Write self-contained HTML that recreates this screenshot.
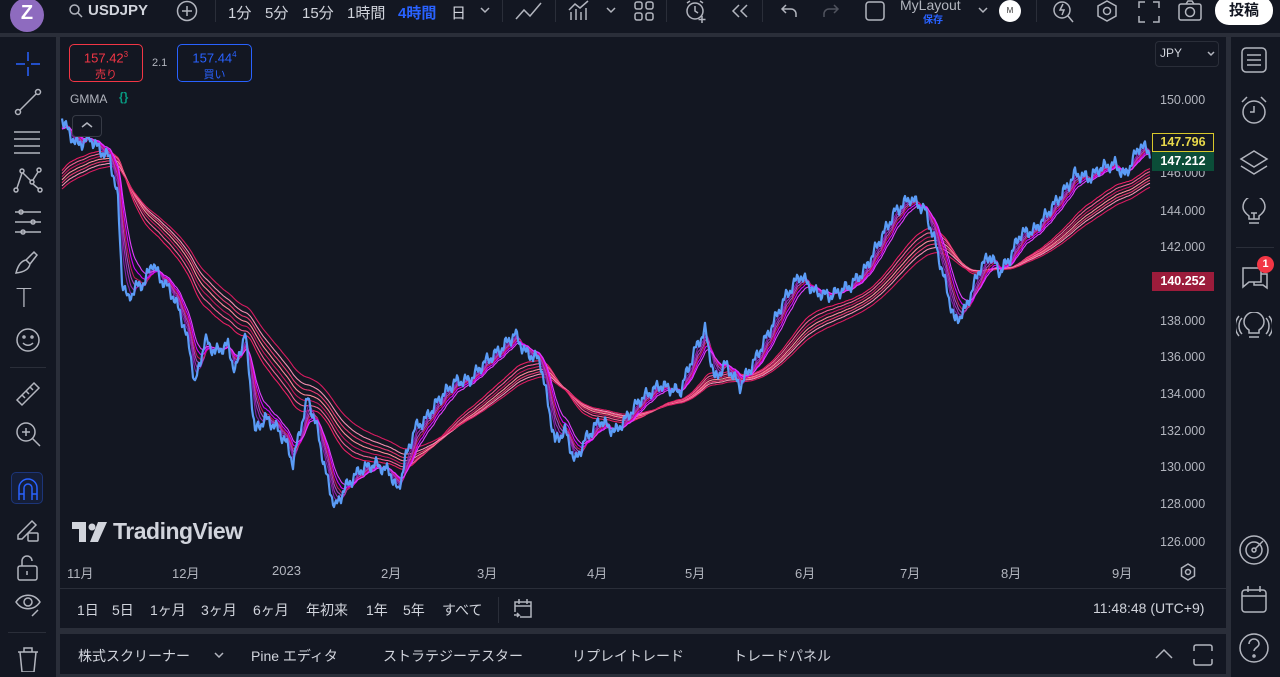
<!DOCTYPE html>
<html><head><meta charset="utf-8"><style>
*{margin:0;padding:0;box-sizing:border-box}
body{width:1280px;height:670px;background:#2a2e39;font-family:"Liberation Sans","Noto Sans CJK JP",sans-serif;color:#d1d4dc;position:relative;overflow:hidden}
.p{position:absolute;background:#131722}
.t{position:absolute;white-space:nowrap}
.ic{position:absolute}
svg.i{position:absolute;fill:none;stroke:#b2b5be;stroke-width:1.5}
</style></head><body>
<div class="p" style="left:0;top:0;width:1280px;height:33px"></div>
<div class="ic" style="left:10px;top:-2px;width:34px;height:34px;border-radius:50%;background:#8e6bbf;color:#fff;font-size:20px;font-weight:bold;text-align:center;line-height:30px">Z</div>
<svg class="i" style="left:68px;top:3px" width="16" height="16" viewBox="0 0 16 16"><circle cx="6.5" cy="6.5" r="4.5"/><path d="M10 10l4 4"/></svg>
<div class="t" style="left:88px;top:2px;font-size:15px;font-weight:bold;color:#d1d4dc">USDJPY</div>
<svg class="i" style="left:176px;top:0" width="22" height="22"><circle cx="11" cy="11" r="9.5"/><path d="M11 6v10M6 11h10"/></svg>
<div class="p" style="left:215px;top:0;width:1px;height:22px;background:#2a2e39"></div>
<div class="t" style="left:228px;top:2px;font-size:15px">1分</div>
<div class="t" style="left:265px;top:2px;font-size:15px">5分</div>
<div class="t" style="left:302px;top:2px;font-size:15px">15分</div>
<div class="t" style="left:347px;top:2px;font-size:15px">1時間</div>
<div class="t" style="left:398px;top:2px;font-size:15px;color:#2962ff;font-weight:bold">4時間</div>
<div class="t" style="left:451px;top:2px;font-size:15px">日</div>
<svg class="i" style="left:480px;top:6px" width="10" height="8"><path d="M1 2l4 4 4-4"/></svg>
<div class="p" style="left:502px;top:0;width:1px;height:22px;background:#2a2e39"></div>
<svg class="i" style="left:515px;top:1px" width="28" height="20"><path d="M1 18l8-9 6 6 11-13"/></svg>
<div class="p" style="left:555px;top:0;width:1px;height:22px;background:#2a2e39"></div>
<svg class="i" style="left:568px;top:0" width="26" height="22"><path d="M3 20V12M8 20V9M13 20V12M18 20V8M1 10l6-6 5 4 8-7"/></svg>
<svg class="i" style="left:606px;top:6px" width="10" height="8"><path d="M1 2l4 4 4-4"/></svg>
<svg class="i" style="left:634px;top:1px" width="20" height="20"><rect x="1" y="1" width="7" height="7" rx="2"/><rect x="12" y="1" width="7" height="7" rx="2"/><rect x="1" y="12" width="7" height="7" rx="2"/><rect x="12" y="12" width="7" height="7" rx="2"/></svg>
<div class="p" style="left:666px;top:0;width:1px;height:22px;background:#2a2e39"></div>
<svg class="i" style="left:684px;top:0" width="24" height="24"><circle cx="11" cy="11" r="8"/><path d="M11 6v5l3 2M3 3l3-2M19 3l-3-2M18 16v7M14.5 19.5h7"/></svg>
<svg class="i" style="left:730px;top:3px" width="20" height="16"><path d="M9 2l-6 6 6 6M17 2l-6 6 6 6"/></svg>
<div class="p" style="left:762px;top:0;width:1px;height:22px;background:#2a2e39"></div>
<svg class="i" style="left:780px;top:3px" width="20" height="16"><path d="M6 2L2 6l4 4M2 6h9a5 5 0 015 5v3"/></svg>
<svg class="i" style="left:820px;top:3px;stroke:#50535e" width="20" height="16"><path d="M14 2l4 4-4 4M18 6H9a5 5 0 00-5 5v3"/></svg>
<svg class="i" style="left:864px;top:0" width="22" height="22"><rect x="2" y="2" width="18" height="18" rx="3"/></svg>
<div class="t" style="left:900px;top:-3px;font-size:14px;color:#b2b5be">MyLayout</div>
<div class="t" style="left:923px;top:11px;font-size:10px;color:#2962ff;font-weight:bold">保存</div>
<svg class="i" style="left:978px;top:6px" width="10" height="8"><path d="M1 2l4 4 4-4"/></svg>
<div class="ic" style="left:999px;top:0;width:22px;height:22px;border-radius:50%;background:#fff;color:#333;font-size:8px;text-align:center;line-height:22px">M</div>
<div class="p" style="left:1036px;top:0;width:1px;height:22px;background:#2a2e39"></div>
<svg class="i" style="left:1052px;top:0" width="24" height="24"><circle cx="10" cy="10" r="8"/><path d="M16 16l5 6M11 4l-3 6h4l-2 5"/></svg>
<svg class="i" style="left:1095px;top:0" width="24" height="24"><path d="M12 1l9 5v10l-9 5-9-5V6z"/><circle cx="12" cy="11" r="3.5"/></svg>
<svg class="i" style="left:1138px;top:1px" width="22" height="22"><path d="M1 7V1h6M15 1h6v6M21 15v6h-6M7 21H1v-6"/></svg>
<svg class="i" style="left:1178px;top:0" width="24" height="22"><rect x="1" y="4" width="22" height="16" rx="2"/><circle cx="12" cy="12" r="4.5"/><path d="M8 4l2-3h4l2 3"/></svg>
<div class="ic" style="left:1215px;top:-4px;width:58px;height:29px;border-radius:14px;background:#fff;color:#131722;font-size:15px;font-weight:bold;text-align:center;line-height:29px">投稿</div>

<div class="p" style="left:0;top:37px;width:56px;height:640px"></div>
<div class="p" style="left:60px;top:37px;width:1166px;height:591px"></div>
<div class="p" style="left:60px;top:588px;width:1166px;height:1px;background:#2a2e39"></div>
<div class="p" style="left:1231px;top:37px;width:49px;height:640px"></div>
<div class="p" style="left:60px;top:634px;width:1166px;height:40px"></div>

<svg class="i" style="left:14px;top:50px;stroke:#2962ff" width="28" height="28"><path d="M14 2v9M14 17v9M2 14h9M17 14h9"/></svg>
<svg class="i" style="left:14px;top:88px" width="28" height="28"><circle cx="4" cy="24" r="2.5"/><circle cx="24" cy="4" r="2.5"/><path d="M6 22L22 6"/></svg>
<svg class="i" style="left:12px;top:128px" width="30" height="28"><path d="M2 4h26M2 11h26M2 18h26M2 25h26"/></svg>
<svg class="i" style="left:13px;top:166px" width="30" height="28"><circle cx="3" cy="24" r="2"/><circle cx="9" cy="5" r="2"/><circle cx="19" cy="16" r="2"/><circle cx="26" cy="4" r="2"/><circle cx="27" cy="24" r="2"/><path d="M4 22l5-15M10 7l8 8M20 14l5-8M20 18l6 5"/></svg>
<svg class="i" style="left:13px;top:208px" width="30" height="28"><path d="M2 4h26M2 14h26M2 24h26"/><circle cx="8" cy="4" r="2"/><circle cx="20" cy="14" r="2"/><circle cx="10" cy="24" r="2"/></svg>
<svg class="i" style="left:13px;top:248px" width="30" height="28"><path d="M3 25c2-8 5-12 10-13l4 4c-1 5-5 8-14 9zM13 12l8-8 3 3-7 9"/></svg>
<div class="t" style="left:16px;top:284px;font-size:26px;color:#b2b5be;font-family:'DejaVu Sans',sans-serif;font-weight:300">T</div>
<svg class="i" style="left:14px;top:326px" width="28" height="28"><circle cx="14" cy="14" r="11"/><circle cx="10" cy="11" r="1"/><circle cx="18" cy="11" r="1"/><path d="M9 17c3 3 7 3 10 0"/></svg>
<div class="p" style="left:10px;top:367px;width:36px;height:1px;background:#2a2e39"></div>
<svg class="i" style="left:14px;top:380px" width="28" height="28"><path d="M3 20L20 3l5 5L8 25zM8 15l3 3M12 11l3 3M16 7l3 3"/></svg>
<svg class="i" style="left:14px;top:420px" width="28" height="28"><circle cx="12" cy="12" r="9"/><path d="M18.5 18.5L26 26M8 12h8M12 8v8"/></svg>
<div class="ic" style="left:11px;top:472px;width:32px;height:32px;border-radius:5px;background:#1e3a8a33;border:1px solid #2962ff55"></div>
<svg class="i" style="left:14px;top:476px;stroke:#2962ff" width="28" height="26"><path d="M5 24V12a9 9 0 0118 0v12M5 18h5M18 18h5M10 24V12a4 4 0 018 0v12"/></svg>
<svg class="i" style="left:14px;top:515px" width="28" height="28"><path d="M4 20L18 6l4 4L8 24H4z"/><rect x="14" y="18" width="10" height="8" rx="1"/></svg>
<svg class="i" style="left:16px;top:554px" width="24" height="28"><rect x="2" y="12" width="19" height="14" rx="2"/><path d="M6 12V7a5 5 0 0110 0M11 17v4"/></svg>
<svg class="i" style="left:14px;top:592px" width="28" height="28"><path d="M2 10c6-9 18-9 24 0c-6 9-18 9-24 0z"/><circle cx="14" cy="10" r="4"/><path d="M18 24l6-6"/></svg>
<div class="p" style="left:8px;top:632px;width:38px;height:1px;background:#2a2e39"></div>
<svg class="i" style="left:16px;top:646px" width="24" height="26"><path d="M2 6h20M8 6V2h8v4M4 6l2 20h12l2-20"/></svg>

<svg class="i" style="left:1240px;top:46px" width="28" height="28"><rect x="2" y="2" width="24" height="24" rx="4"/><path d="M7 9h14M7 14h14M7 19h14"/></svg>
<svg class="i" style="left:1240px;top:96px" width="28" height="30"><circle cx="14" cy="16" r="11"/><path d="M14 10v6h-4M2 6l5-5M26 6l-5-5"/></svg>
<svg class="i" style="left:1239px;top:148px" width="30" height="30"><path d="M15 3l13 8-13 8-13-8zM2 18l13 8 13-8"/></svg>
<svg class="i" style="left:1241px;top:198px" width="26" height="30"><path d="M8 21v-3c-4-3-6-6-6-9a11 11 0 0122 0c0 3-2 6-6 9v3zM8 25h10M13 15v6M10 15h6"/></svg>
<div class="p" style="left:1236px;top:247px;width:38px;height:1px;background:#2a2e39"></div>
<svg class="i" style="left:1240px;top:262px" width="30" height="32"><path d="M3 6h18v14H9l-6 5zM21 12h6v14l-4-3h-9v-3"/></svg>
<div class="ic" style="left:1257px;top:256px;width:17px;height:17px;border-radius:50%;background:#f23645;color:#fff;font-size:11px;font-weight:bold;text-align:center;line-height:17px">1</div>
<svg class="i" style="left:1236px;top:312px" width="36" height="30"><path d="M13 21v-3c-3-2-5-5-5-8a10 10 0 0120 0c0 3-2 6-5 8v3zM13 25h10M6 6c-4 4-4 12 0 16M3 4c-5 6-5 14 0 20M30 6c4 4 4 12 0 16M33 4c5 6 5 14 0 20"/></svg>
<svg class="i" style="left:1238px;top:534px" width="32" height="32"><circle cx="16" cy="16" r="14"/><circle cx="16" cy="16" r="8"/><circle cx="16" cy="16" r="2"/><path d="M17 15l8-8"/></svg>
<svg class="i" style="left:1240px;top:584px" width="28" height="30"><rect x="2" y="6" width="24" height="22" rx="3"/><path d="M2 12h24M8 2v6M20 2v6"/></svg>
<svg class="i" style="left:1238px;top:632px" width="32" height="32"><circle cx="16" cy="16" r="14"/><path d="M11 12a5 5 0 1110 0c0 3-5 4-5 7"/><circle cx="16" cy="24" r="1"/></svg>

<svg id="ch" style="position:absolute;left:0;top:0" width="1280" height="670"></svg>

<div class="ic" style="left:69px;top:44px;width:74px;height:38px;border:1px solid #f23645;border-radius:5px;color:#f23645;text-align:center;font-size:13px;line-height:16px;padding-top:2px">157.42<sup style="font-size:8px">3</sup><br><span style="font-size:11px">売り</span></div>
<div class="t" style="left:152px;top:57px;font-size:11px;color:#b2b5be">2.1</div>
<div class="ic" style="left:177px;top:44px;width:75px;height:38px;border:1px solid #2962ff;border-radius:5px;color:#2962ff;text-align:center;font-size:13px;line-height:16px;padding-top:2px">157.44<sup style="font-size:8px">4</sup><br><span style="font-size:11px">買い</span></div>
<div class="t" style="left:70px;top:92px;font-size:12px;color:#b2b5be">GMMA</div>
<div class="t" style="left:119px;top:90px;font-size:12px;color:#089981;font-weight:bold">{}</div>
<div class="ic" style="left:72px;top:115px;width:30px;height:22px;border:1px solid #363a45;border-radius:4px;background:#131722"></div>
<svg class="i" style="left:80px;top:121px" width="14" height="8"><path d="M2 6l5-4 5 4"/></svg>
<div class="ic" style="left:1155px;top:41px;width:64px;height:26px;border:1px solid #2a2e39;border-radius:4px"></div>
<div class="t" style="left:1160px;top:46px;font-size:12px;color:#d1d4dc">JPY</div>
<svg class="i" style="left:1207px;top:51px" width="8" height="6"><path d="M1 1l3 3 3-3"/></svg>
<svg style="position:absolute;left:72px;top:522px" width="38" height="20"><path d="M0 0h14v20H7V7H0z" fill="#d1d4dc"/><circle cx="20" cy="5" r="3.5" fill="#d1d4dc"/><path d="M26 0h9l-9 20h-8z" fill="#d1d4dc"/></svg>
<div class="t" style="left:113px;top:518px;font-size:23px;font-weight:bold;color:#d1d4dc;letter-spacing:-0.5px">TradingView</div>

<div id="ax"></div>
<div class="ic" style="left:1152px;top:133px;width:62px;height:19px;border:1px solid #d7c72b;background:#131722;color:#e8d84a;font-size:12.5px;font-weight:bold;text-align:center;line-height:17px">147.796</div>
<div class="ic" style="left:1152px;top:152px;width:62px;height:19px;background:#0b4d38;color:#fff;font-size:12.5px;font-weight:bold;text-align:center;line-height:19px">147.212</div>
<div class="ic" style="left:1152px;top:272px;width:62px;height:19px;background:#9c1c3b;color:#fff;font-size:12.5px;font-weight:bold;text-align:center;line-height:19px">140.252</div>
<svg class="i" style="left:1180px;top:563px" width="16" height="18"><path d="M8 1l6.5 4v8L8 17l-6.5-4V5z"/><circle cx="8" cy="9" r="2.5"/></svg>

<div class="t" style="left:77px;top:600px;font-size:14px;color:#d1d4dc">1日</div>
<div class="t" style="left:112px;top:600px;font-size:14px">5日</div>
<div class="t" style="left:150px;top:600px;font-size:14px">1ヶ月</div>
<div class="t" style="left:201px;top:600px;font-size:14px">3ヶ月</div>
<div class="t" style="left:253px;top:600px;font-size:14px">6ヶ月</div>
<div class="t" style="left:306px;top:600px;font-size:14px">年初来</div>
<div class="t" style="left:366px;top:600px;font-size:14px">1年</div>
<div class="t" style="left:403px;top:600px;font-size:14px">5年</div>
<div class="t" style="left:442px;top:600px;font-size:14px">すべて</div>
<div class="p" style="left:498px;top:597px;width:1px;height:26px;background:#2a2e39"></div>
<svg class="i" style="left:512px;top:597px" width="22" height="24"><path d="M3 15V5h16v15H8M3 9h16M7 2v5M15 2v5M2 18h5l-2-2M7 18l-2 2"/></svg>
<div class="t" style="left:1093px;top:600px;font-size:14px">11:48:48 (UTC+9)</div>

<div class="t" style="left:78px;top:646px;font-size:14px">株式スクリーナー</div>
<svg class="i" style="left:214px;top:652px" width="10" height="6"><path d="M1 1l4 4 4-4"/></svg>
<div class="t" style="left:251px;top:646px;font-size:14px">Pine エディタ</div>
<div class="t" style="left:383px;top:646px;font-size:14px">ストラテジーテスター</div>
<div class="t" style="left:572px;top:646px;font-size:14px">リプレイトレード</div>
<div class="t" style="left:733px;top:646px;font-size:14px">トレードパネル</div>
<svg class="i" style="left:1154px;top:648px" width="20" height="12"><path d="M2 10l8-8 8 8"/></svg>
<svg class="i" style="left:1192px;top:644px" width="22" height="22"><path d="M2 7V3a2 2 0 012-2h14a2 2 0 012 2v4M2 15v4a2 2 0 002 2h14a2 2 0 002-2v-4"/></svg>

<script>
var ax=document.getElementById('ax'),h='';
[[150,101],[146,174],[144,212],[142,248],[138,322],[136,358],[134,395],[132,432],[130,468],[128,505],[126,543]].forEach(function(a){
h+='<div class="t" style="left:1160px;top:'+(a[1]-8)+'px;font-size:12.5px;color:#b2b5be">'+a[0].toFixed(3)+'</div>';});
[['11月',67],['12月',172],['2023',272],['2月',381],['3月',477],['4月',587],['5月',685],['6月',795],['7月',900],['8月',1001],['9月',1112]].forEach(function(a){
h+='<div class="t" style="left:'+a[1]+'px;top:563px;font-size:13px;color:#b2b5be">'+a[0]+'</div>';});
ax.innerHTML=h;
var P=[[62,118],[70,135],[78,145],[90,138],[100,150],[110,158],[118,200],[122,280],[128,300],[135,288],[145,282],[152,262],[160,278],[170,290],[180,312],[190,350],[195,385],[205,340],[215,352],[228,345],[235,372],[245,332],[255,432],[265,418],[275,426],[285,440],[293,463],[300,430],[308,398],[318,432],[325,470],[335,508],[345,488],[360,470],[375,464],[390,472],[398,492],[405,460],[415,428],[425,420],[440,398],[455,382],[470,380],[485,362],[500,350],[515,334],[525,352],[540,360],[555,442],[565,430],[575,462],[585,440],[600,420],[615,432],[625,420],[640,400],[660,385],[680,392],[695,350],[705,330],[715,380],[725,364],[740,386],[755,360],[770,330],[785,298],[800,275],[815,292],[830,296],[850,286],[865,270],[880,240],[895,212],[910,198],[925,210],[935,242],[945,282],[955,322],[965,310],[980,268],[990,255],[1000,272],[1010,258],[1020,234],[1035,230],[1050,210],[1065,190],[1075,174],[1090,178],[1100,168],[1115,164],[1125,176],[1140,145],[1150,152]];
var ys=[],j=0;
for(var x=62;x<=1150;x++){while(P[j+1][0]<x)j++;var a=P[j],b=P[j+1],t=(x-a[0])/(b[0]-a[0]);
var n=Math.sin(x*1.7)*3.5+Math.sin(x*0.63)*4;ys.push(a[1]+(b[1]-a[1])*t+n);}
function ema(n,init){var al=2/(n+1),v=init,o=[];ys.forEach(function(y){v+=al*(y-v);o.push(v);});return o;}
function pl(arr,c,w){var s='';arr.forEach(function(y,i){s+=(62+i)+','+y.toFixed(1)+' ';});return '<polyline points="'+s+'" fill="none" stroke="'+c+'" stroke-width="'+w+'" stroke-linejoin="round"/>';}
var out='';
var slow=[75,85,95,105,115,125,140];
slow.forEach(function(n,k){out+=pl(ema(n,172+k*3),['#e91e63','#f06292','#c2185b','#ff8a9a','#e53970','#f48fb1','#d81b60'][k],1.1);});
var fast=[6,9,12,15,19,24];
fast.forEach(function(n,k){out+=pl(ema(n,130),['#7b1fa2','#9c27b0','#ab47bc','#c2185b','#d500f9','#e040fb'][k],1.1);});
out+=pl(ys,'#5b9cf6',2.2);
document.getElementById('ch').innerHTML=out;
</script>
</body></html>
